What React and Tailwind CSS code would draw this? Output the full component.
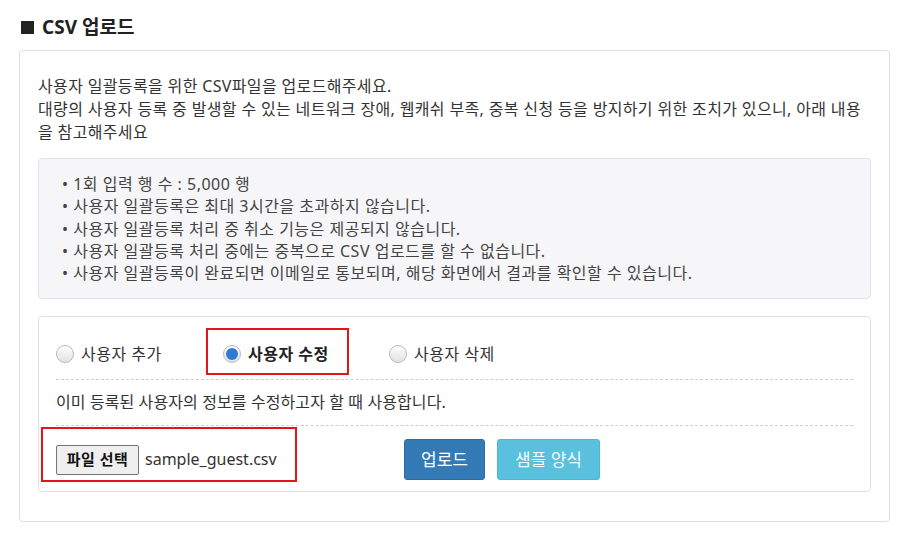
import { useState } from "react";

const FONT = "font-['Noto_Sans','Noto_Sans_CJK_KR',sans-serif]";

const notes = [
  "1회 입력 행 수 : 5,000 행",
  "사용자 일괄등록은 최대 3시간을 초과하지 않습니다.",
  "사용자 일괄등록 처리 중 취소 기능은 제공되지 않습니다.",
  "사용자 일괄등록 처리 중에는 중복으로 CSV 업로드를 할 수 없습니다.",
  "사용자 일괄등록이 완료되면 이메일로 통보되며, 해당 화면에서 결과를 확인할 수 있습니다.",
];

const modes = [
  { id: "add", label: "사용자 추가", width: "w-[167px]" },
  { id: "edit", label: "사용자 수정", width: "w-[166px]" },
  { id: "delete", label: "사용자 삭제", width: "" },
];

function Radio({ checked, label, onClick }) {
  return (
    <label className="flex items-center gap-[7px] cursor-pointer" onClick={onClick}>
      <span className="w-[18px] h-[18px] rounded-full border border-[#b9b9b9] bg-gradient-to-b from-[#fdfdfd] to-[#e2e2e2] flex items-center justify-center">
        {checked && <span className="w-[12px] h-[12px] rounded-full bg-[#2f7bd1]" />}
      </span>
      <span className={checked ? "font-bold text-[#222]" : ""}>{label}</span>
    </label>
  );
}

export default function App() {
  const [mode, setMode] = useState("edit");

  return (
    <div className={`${FONT} bg-white text-[#333] pl-[19px] pr-[10px] pt-[14px] pb-[10px]`}>
      <h2 className="text-[19px] font-bold text-[#222] leading-[26px] pl-[2px] mb-[10px] flex items-center gap-[8px]">
        <span className="w-[13px] h-[13px] bg-[#222] inline-block" />
        CSV 업로드
      </h2>

      <div className="border border-[#dedee3] rounded-[4px] px-[18px] pt-[24px] pb-[29px] text-[16px] tracking-[0.5px] leading-[23px]">
        <p className="tracking-[0.35px]">
          사용자 일괄등록을 위한 CSV파일을 업로드해주세요.
          <br />
          대량의 사용자 등록 중 발생할 수 있는 네트워크 장애, 웹캐쉬 부족, 중복 신청 등을 방지하기 위한 조치가 있으니, 아래 내용을 참고해주세요
        </p>

        <ul className="mt-[14px] bg-[#f6f6f8] border border-[#e2e2e7] rounded-[4px] pl-[23px] pr-4 py-[14px] leading-[22.3px] text-[#444]">
          {notes.map((n) => (
            <li key={n}>• {n}</li>
          ))}
        </ul>

        <div className="mt-[17px] border border-[#e0e0e5] rounded-[4px] px-[17px] pb-[11px]">
          <div className="relative flex items-center h-[62px] pt-[12px]">
            {modes.map((m) => (
              <div key={m.id} className={m.width}>
                <Radio checked={mode === m.id} label={m.label} onClick={() => setMode(m.id)} />
              </div>
            ))}
            <div className="absolute left-[150px] top-[11px] w-[143px] h-[47px] border-2 border-[#e3151a] pointer-events-none" />
          </div>

          <div className="border-t border-dashed border-[#cfcfcf] py-[11px] tracking-[0.1px]">
            이미 등록된 사용자의 정보를 수정하고자 할 때 사용합니다.
          </div>

          <div className="relative border-t border-dashed border-[#cfcfcf] pt-[13px] flex items-center">
            <div className="flex items-center w-[348px]">
              <button className="h-[30px] w-[83px] bg-[#efefef] border border-[#767676] rounded-[2px] text-[15px] font-bold text-[#111]">
                파일 선택
              </button>
              <span className="ml-[6px] text-[#333] tracking-normal">sample_guest.csv</span>
            </div>
            <button className="h-[41px] w-[81px] bg-[#337ab7] border border-[#2e6da4] rounded-[3px] text-white text-[17px] tracking-normal">
              업로드
            </button>
            <button className="ml-[12px] h-[41px] w-[103px] bg-[#5bc0de] border border-[#46b8da] rounded-[3px] text-[#f4fbfd] text-[17px] tracking-normal">
              샘플 양식
            </button>
            <div className="absolute left-[-15px] top-[1px] w-[256px] h-[55px] border-2 border-[#e3151a] pointer-events-none" />
          </div>
        </div>
      </div>
    </div>
  );
}
